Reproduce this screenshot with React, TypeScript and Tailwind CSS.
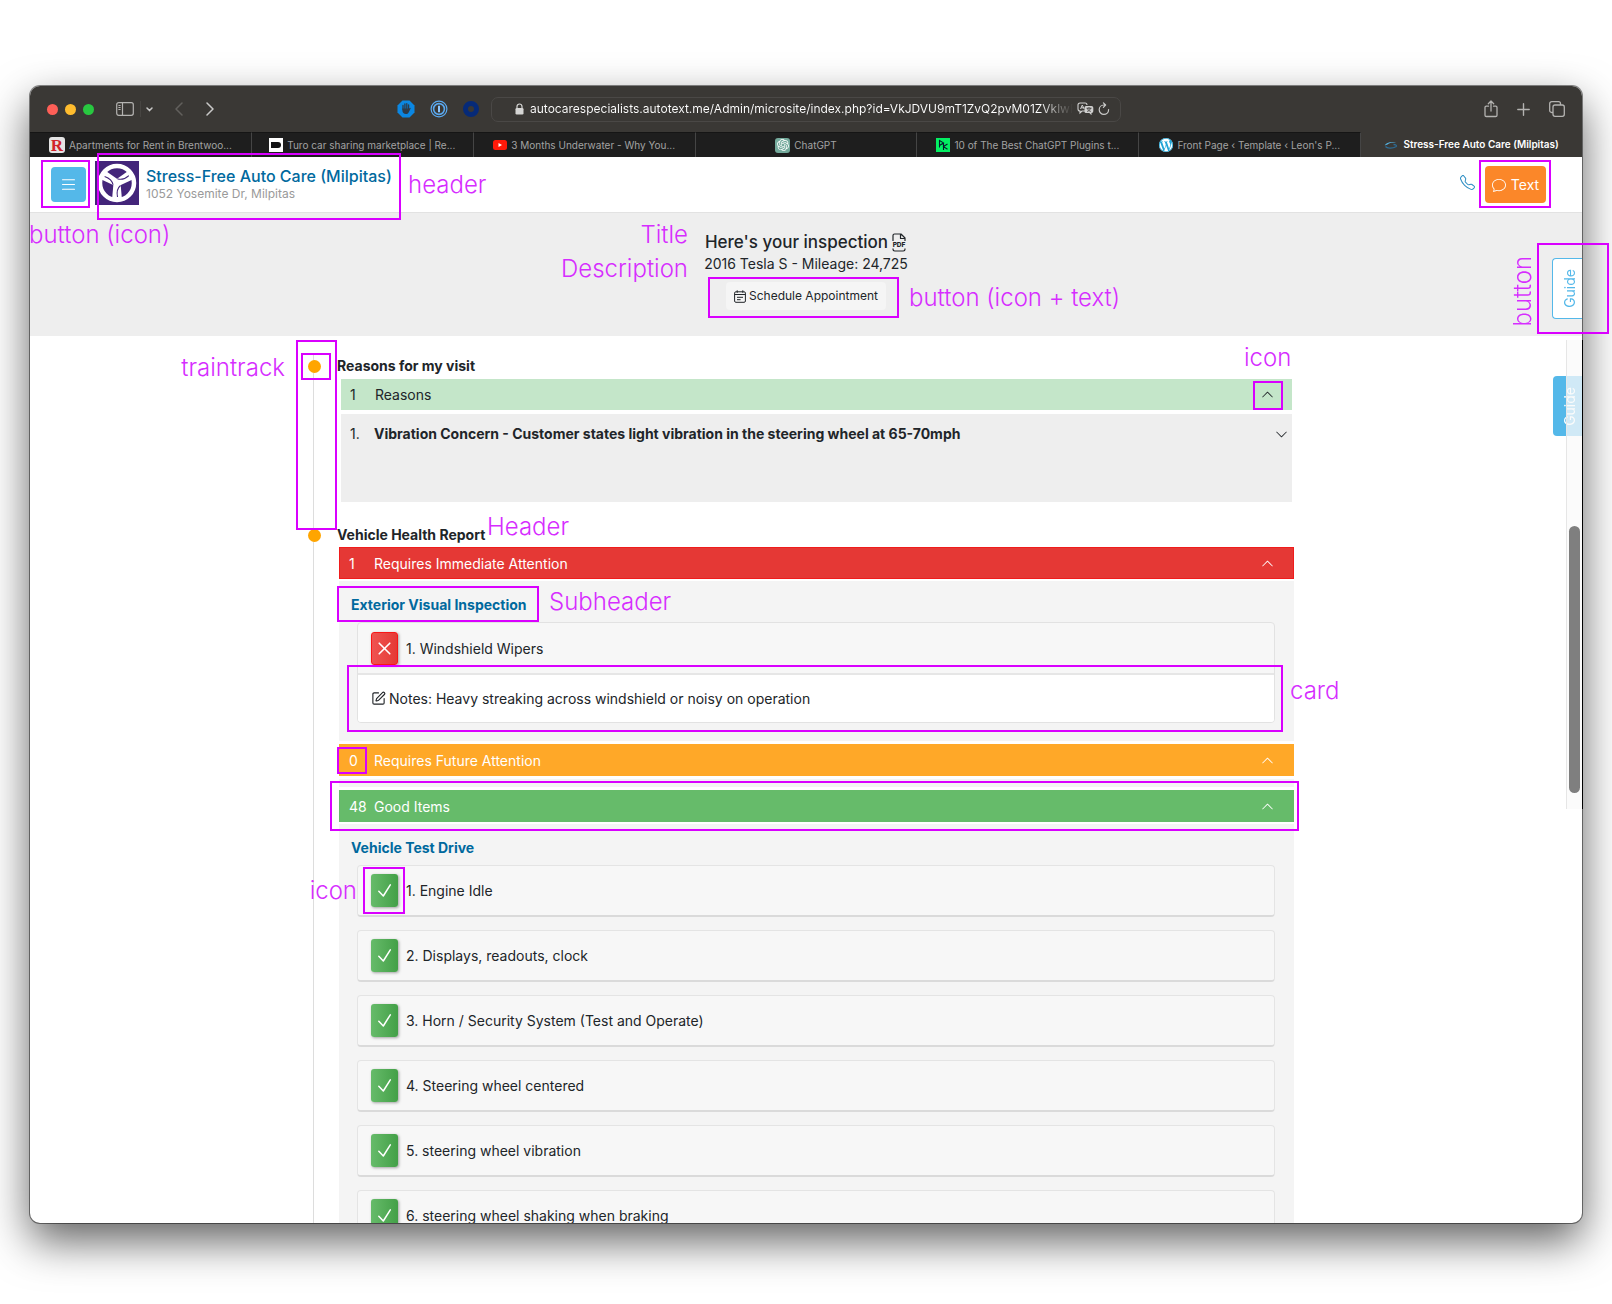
import type { ReactNode } from "react";
import { SquarePen } from "lucide-react";
import { BsChat, BsChevronDown, BsChevronUp, BsList, BsTelephone } from "react-icons/bs";
import { SiOpenai, SiWordpress } from "react-icons/si";

/* ---------- browser chrome ---------- */

function SidebarIcon() {
  return (
    <svg width="18" height="14" viewBox="0 0 18 14" fill="none" stroke="#b4b3b1" strokeWidth="1.2" aria-hidden="true">
      <rect x="0.7" y="0.7" width="16.6" height="12.6" rx="2" />
      <path d="M6.5 1v12M2.4 3.5h2.2M2.4 5.5h2.2M2.4 7.5h2.2" />
    </svg>
  );
}

function Chevron({ dir, color }: { dir: "left" | "right"; color: string }) {
  return (
    <svg width="8" height="14" viewBox="0 0 8 14" fill="none" stroke={color} strokeWidth="1.5" strokeLinecap="round" strokeLinejoin="round" aria-hidden="true">
      <path d={dir === "left" ? "M7 1 1 7l6 6" : "M1 1l6 6-6 6"} />
    </svg>
  );
}

function AdblockIcon() {
  return (
    <svg width="18" height="18" viewBox="0 0 18 18" aria-hidden="true">
      <path d="M5.5.5h7l5 5v7l-5 5h-7l-5-5v-7z" fill="#0b87e3" />
      <path d="M6 9.500V5.500M7.900 8.600V4M9.800 8.600V3.700M11.600 9V4.900" stroke="#2d3b4a" strokeWidth="1.300" strokeLinecap="round" />
      <path d="M5.400 8.500h6.800l1-.7.5.8-2.100 3.800c-.6 1.200-1.300 1.700-2.600 1.700-2.200 0-3.600-1.400-3.600-3.500z" fill="#2d3b4a" />
    </svg>
  );
}

function OnePasswordIcon() {
  return (
    <svg width="18" height="18" viewBox="0 0 18 18" fill="none" aria-hidden="true">
      <circle cx="9" cy="9" r="7.900" stroke="#5aa9f0" strokeWidth="1.200" />
      <circle cx="9" cy="9" r="5.400" stroke="#5aa9f0" strokeWidth="1.600" />
      <path d="M9 5.800v6.400" stroke="#8cc6ff" strokeWidth="2" />
    </svg>
  );
}

function LockIcon() {
  return (
    <svg width="9" height="12" viewBox="0 0 9 12" aria-hidden="true">
      <path d="M2 5.500V3.500a2.500 2.500 0 0 1 5 0v2" fill="none" stroke="#d5d5d4" strokeWidth="1.200" />
      <rect x="0.500" y="5" width="8" height="6.500" rx="1.200" fill="#d5d5d4" />
    </svg>
  );
}

function TranslateIcon() {
  return (
    <svg width="17" height="14" viewBox="0 0 17 14" fill="none" aria-hidden="true">
      <path d="M8 9H5l-2 2V9a2 2 0 0 1-2-2V3a2 2 0 0 1 2-2h5a2 2 0 0 1 2 2" stroke="#d0d0cf" strokeWidth="1.100" />
      <path d="M3.500 7 5.300 3l1.800 4M4.200 5.800h2.200" stroke="#d0d0cf" strokeWidth="1" />
      <path d="M9 4h5.500A1.800 1.800 0 0 1 16.300 5.800v3.400a1.800 1.800 0 0 1-1.800 1.800v2.200L12.300 11H9a1.500 1.500 0 0 1-1.500-1.500v-4A1.500 1.500 0 0 1 9 4z" fill="#d0d0cf" />
      <path d="M9.500 6.200h5M12 5.200v1M10.200 9.400c2-.6 2.800-1.600 3.200-3.100M10.500 6.400c.4 1.500 1.400 2.500 3.200 3" stroke="#3a3835" strokeWidth="0.900" />
    </svg>
  );
}

function ReloadIcon() {
  return (
    <svg width="12" height="14" viewBox="0 0 12 14" fill="none" stroke="#c9c9c8" strokeWidth="1.200" strokeLinecap="round" strokeLinejoin="round" aria-hidden="true">
      <path d="M10.600 7.700a4.700 4.700 0 1 1-4.700-4.700h1.400M5.400.8 7.600 3 5.400 5.300" />
    </svg>
  );
}

function ShareIcon() {
  return (
    <svg width="14" height="18" viewBox="0 0 14 18" fill="none" stroke="#b4b3b1" strokeWidth="1.300" strokeLinecap="round" strokeLinejoin="round" aria-hidden="true">
      <path d="M4.500 6.200H2.300A1.300 1.300 0 0 0 1 7.500v7.700a1.300 1.300 0 0 0 1.300 1.300h9.400a1.300 1.300 0 0 0 1.300-1.300V7.500a1.300 1.300 0 0 0-1.300-1.300H9.500M7 11V1.200M4.300 3.700 7 1l2.700 2.700" />
    </svg>
  );
}

function PlusIcon() {
  return (
    <svg width="13" height="13" viewBox="0 0 13 13" stroke="#b4b3b1" strokeWidth="1.400" strokeLinecap="round" aria-hidden="true">
      <path d="M6.500.8v11.400M.8 6.500h11.400" />
    </svg>
  );
}

function TabsIcon() {
  return (
    <svg width="16" height="16" viewBox="0 0 16 16" fill="none" stroke="#b4b3b1" strokeWidth="1.300" aria-hidden="true">
      <rect x="4" y="4" width="11.300" height="11.300" rx="2" />
      <path d="M4 11.500H2.700A2 2 0 0 1 .7 9.500V2.700a2 2 0 0 1 2-2h6.800a2 2 0 0 1 2 2V4" />
    </svg>
  );
}

function Toolbar() {
  return (
    <div className="grid h-[46px] shrink-0 grid-cols-[1fr_630px_1fr] items-center bg-[#3a3835]">
      <div className="flex items-center pl-[17px]">
        <span className="flex gap-[7px]">
          <span className="size-[11px] rounded-full bg-[#fe5f57]" />
          <span className="size-[11px] rounded-full bg-[#febc2e]" />
          <span className="size-[11px] rounded-full bg-[#28c840]" />
        </span>
        <button type="button" aria-label="Show sidebar" className="ml-[22px]">
          <SidebarIcon />
        </button>
        <span className="ml-[6px] h-[16px] w-px bg-[#474542]" />
        <button type="button" aria-label="Tab groups" className="ml-[5px]">
          <svg width="7" height="5" viewBox="0 0 7 5" fill="none" stroke="#c9c9c8" strokeWidth="1.500" strokeLinecap="round" strokeLinejoin="round" aria-hidden="true">
            <path d="M1 1l2.500 2.600L6 1" />
          </svg>
        </button>
        <button type="button" aria-label="Back" className="ml-[22px]">
          <Chevron dir="left" color="#62605d" />
        </button>
        <button type="button" aria-label="Forward" className="ml-[23px]">
          <Chevron dir="right" color="#c9c9c8" />
        </button>
        <span className="mr-[12px] ml-auto flex items-center gap-[15px]">
          <AdblockIcon />
          <OnePasswordIcon />
          <span className="size-[16px] rounded-full border-[5px] border-[#062a78]" />
        </span>
      </div>
      <div className="flex h-[25px] items-center rounded-[7px] border border-[#4a4846] pr-[10px] pl-[23px]">
        <LockIcon />
        <span className="ml-[6px] w-0 grow overflow-hidden bg-linear-to-r from-[#ffffff] from-94% to-[#3a3835] bg-clip-text text-[12px] whitespace-nowrap text-transparent">
          autocarespecialists.autotext.me/Admin/microsite/index.php?id=VkJDVU9mT1ZvQ2pvM01ZVklwRGRoZ
        </span>
        <span className="ml-[4px] flex items-center gap-[4px]">
          <TranslateIcon />
          <ReloadIcon />
        </span>
      </div>
      <div className="flex items-center justify-end gap-[19px] pr-[17px]">
        <button type="button" aria-label="Share"><ShareIcon /></button>
        <button type="button" aria-label="New tab"><PlusIcon /></button>
        <button type="button" aria-label="Show tabs"><TabsIcon /></button>
      </div>
    </div>
  );
}

const tabs: { label: string; icon: ReactNode }[] = [
  {
    label: "Apartments for Rent in Brentwoo...",
    icon: (
      <span className="flex size-[16px] items-center justify-center rounded-[3px] bg-[#e4e4e4] font-['Liberation_Serif',serif] text-[17px] leading-none font-bold text-[#d2232a]">R</span>
    ),
  },
  {
    label: "Turo car sharing marketplace | Re...",
    icon: (
      <span className="flex size-[14px] items-center justify-center bg-white">
        <span className="h-[6px] w-[10px] rounded-r-[3px] bg-[#121214]" />
      </span>
    ),
  },
  {
    label: "3 Months Underwater - Why You...",
    icon: (
      <svg width="14" height="10" viewBox="0 0 14 10" aria-hidden="true">
        <rect width="14" height="10" rx="2.500" fill="#ff1a0a" />
        <path d="M5.500 3v4L9 5z" fill="#fff" />
      </svg>
    ),
  },
  {
    label: "ChatGPT",
    icon: (
      <span className="flex size-[15px] items-center justify-center rounded-[3px] bg-[#74aa9c] text-white">
        <SiOpenai size={12} />
      </span>
    ),
  },
  {
    label: "10 of The Best ChatGPT Plugins t...",
    icon: (
      <svg width="14" height="14" viewBox="0 0 14 14" aria-hidden="true">
        <rect width="14" height="14" fill="#03ef62" />
        <path d="M3.500 9.500V2.500l4 2.400-4 2.600M11.500 6 7.500 8.600l4 2.600M7.500 5v7" fill="none" stroke="#05192d" strokeWidth="1.100" />
      </svg>
    ),
  },
  {
    label: "Front Page ‹ Template ‹ Leon's P...",
    icon: (
      <span className="flex size-[14px] items-center justify-center rounded-full bg-white text-[#21a5d6]">
        <SiWordpress size={14} />
      </span>
    ),
  },
  {
    label: "Stress-Free Auto Care (Milpitas)",
    icon: (
      <svg width="14" height="8" viewBox="0 0 14 8" fill="none" aria-hidden="true">
        <path d="M.7 4.500C2 1.800 6 .3 12.500 1.300 9 1.200 5 2 3.500 3.500z" fill="#56b6e6" />
        <path d="M1.500 5.500C3 7.500 8 7.800 12.500 5.500M9.500 3.500c2 0 3.200.6 3 2" stroke="#2d6c95" strokeWidth="1.300" />
      </svg>
    ),
  },
];

function TabBar() {
  return (
    <div className="flex h-[25px] shrink-0 bg-[#1e1e1e] text-[10px]">
      {tabs.map((t, i) => (
        <button
          key={t.label}
          type="button"
          className={
            i === tabs.length - 1
              ? "flex min-w-0 flex-1 items-center justify-center gap-[5px] bg-[#3a3835] font-semibold text-white"
              : "flex min-w-0 flex-1 items-center justify-center gap-[4px] border-t border-r border-t-[#151515] border-r-[#454545] text-[#a3a3a3]"
          }
        >
          {t.icon}
          <span className="whitespace-nowrap">{t.label}</span>
        </button>
      ))}
    </div>
  );
}

/* ---------- page ---------- */

function ShopLogo() {
  return (
    <svg width="44" height="44" viewBox="0 0 44 44" aria-hidden="true">
      <rect width="44" height="44" fill="#43257a" />
      <g fill="#fff">
        {[0, 120, 240].map((a) => (
          <path key={a} transform={`rotate(${a} 22 22)`} d="M18.500 22 17 39h10l-1.500-17L22 18z" />
        ))}
      </g>
      <g fill="none" stroke="#43257a" strokeWidth="1.100">
        {[0, 120, 240].map((a) => (
          <path key={a} transform={`rotate(${a} 22 22)`} d="M25.500 24.500C22.500 27 21.500 31 22.500 36" />
        ))}
      </g>
      <circle cx="22" cy="22" r="17" fill="none" stroke="#fff" strokeWidth="4.500" />
    </svg>
  );
}

function PdfIcon() {
  return (
    <svg width="16" height="19" viewBox="0 0 16 19" fill="none" stroke="currentColor" strokeWidth="1.200" strokeLinejoin="round" aria-hidden="true">
      <path d="M2 8V2.500A1.500 1.500 0 0 1 3.500 1H10l4 4v3M9.500 1v4.500H14M2 15.500v.8A1.700 1.700 0 0 0 3.700 18h8.600a1.700 1.700 0 0 0 1.700-1.700v-.8" />
      <text x="8" y="14.200" textAnchor="middle" fontSize="6.500" fontWeight="800" fill="currentColor" stroke="none">PDF</text>
    </svg>
  );
}

function CalendarIcon() {
  return (
    <svg width="12" height="13" viewBox="0 0 12 13" fill="none" stroke="currentColor" strokeWidth="1" aria-hidden="true">
      <rect x="0.600" y="1.800" width="10.800" height="10.500" rx="1.300" />
      <path d="M.6 4.500h10.800M3.200.3v2.500M8.800.3v2.500M3 7.300h6M3 9.700h3.600" />
    </svg>
  );
}

function CheckIcon() {
  return (
    <svg width="15" height="15" viewBox="0 0 15 15" fill="none" stroke="currentColor" strokeWidth="1.500" strokeLinecap="round" strokeLinejoin="round" aria-hidden="true">
      <path d="M1.800 8.300 6.300 13 13.300 1.800" />
    </svg>
  );
}

function CrossIcon() {
  return (
    <svg width="13" height="13" viewBox="0 0 13 13" stroke="currentColor" strokeWidth="1.600" strokeLinecap="round" aria-hidden="true">
      <path d="M1.200 1.200l10.600 10.600M11.800 1.200 1.200 11.800" />
    </svg>
  );
}

function SiteHeader() {
  return (
    <header className="flex h-[56px] shrink-0 items-center border-b border-[#e2e2e2] bg-white pr-[36px] pl-[21px]">
      <button type="button" aria-label="Menu" className="flex size-[35px] items-center justify-center rounded-[4px] bg-[#54b8e9] text-white">
        <BsList size={19} />
      </button>
      <div className="mb-[4px] ml-[9px]">
        <ShopLogo />
      </div>
      <div className="mb-[3px] ml-[7px]">
        <h1 className="text-[16px] leading-[20px] font-medium text-[#00699e]">Stress-Free Auto Care (Milpitas)</h1>
        <p className="text-[12px] leading-[15px] text-[#9a9a9a]">1052 Yosemite Dr, Milpitas</p>
      </div>
      <button type="button" aria-label="Call" className="mb-[4px] ml-auto text-[#2f8fc4]">
        <BsTelephone size={15} />
      </button>
      <button type="button" className="ml-[10px] flex h-[37px] w-[61px] items-center justify-center gap-[5px] rounded-[4px] bg-[#fb8729] text-[14px] text-white">
        <BsChat size={14} />
        Text
      </button>
    </header>
  );
}

function Hero() {
  return (
    <section className="flex h-[123px] shrink-0 flex-col items-center bg-[#eeeeee] pt-[18px]">
      <h2 className="flex items-center gap-[3px] text-[17px] leading-[22px] font-medium">
        Here&apos;s your inspection
        <PdfIcon />
      </h2>
      <p className="text-[14px] leading-[21px]">2016 Tesla S - Mileage: 24,725</p>
      <button type="button" className="mt-[8px] flex h-[28px] items-center gap-[3px] rounded-[4px] bg-[#f5f5f5] px-[8px] text-[12px]">
        <CalendarIcon />
        Schedule Appointment
      </button>
    </section>
  );
}

function Bar({ count, label, tone }: { count: string; label: string; tone: string }) {
  return (
    <button type="button" className={`flex w-full items-center text-left text-[14px] ${tone}`}>
      <span className="w-[25px]">{count}</span>
      <span>{label}</span>
      <BsChevronUp size={13} className="ml-auto" />
    </button>
  );
}

function StopHeading({ children }: { children: ReactNode }) {
  return (
    <h3 className="relative flex h-[24px] items-center pb-[2px] pl-[23px] text-[14px] font-bold">
      <span className="absolute top-[6px] -left-[6px] size-[13px] rounded-full bg-[#ffa500]" />
      {children}
    </h3>
  );
}

function Subheader({ children }: { children: ReactNode }) {
  return <h4 className="flex h-[41px] items-center pt-[5px] pl-[12px] text-[14px] font-bold text-[#00699e]">{children}</h4>;
}

function GoodItem({ label }: { label: string }) {
  return (
    <li className="flex h-[52px] items-center rounded-[4px] border border-b-2 border-[#e4e4e4] border-b-[#dadada] bg-[#f7f7f7] pl-[13px] text-[14px]">
      <span className="flex h-[33px] w-[27px] items-center justify-center rounded-[3px] bg-linear-to-r from-[#66bb6a] to-[#43a047] text-white shadow-[1px_1px_3px_rgba(0,0,0,0.35)]">
        <CheckIcon />
      </span>
      <span className="ml-[8px]">{label}</span>
    </li>
  );
}

const goodItems = [
  "1. Engine Idle",
  "2. Displays, readouts, clock",
  "3. Horn / Security System (Test and Operate)",
  "4. Steering wheel centered",
  "5. steering wheel vibration",
  "6. steering wheel shaking when braking",
];

function Timeline() {
  return (
    <main className="mx-auto min-h-0 w-full max-w-[986px] flex-1">
      <div className="pt-[18px]">
        <div className="border-l border-[#dddddd]">
          <StopHeading>Reasons for my visit</StopHeading>
          <div className="pt-px pr-[7px] pb-[21px] pl-[27px]">
            <Bar count="1" label="Reasons" tone="h-[31px] bg-[#c4e6c9] pl-[9px] pr-[18px]" />
            <div className="mt-[4px] flex h-[88px] items-start bg-[#eeeeee] pt-[9px] pr-[4px] pl-[9px] text-[14px] leading-[22px]">
              <span className="w-[24px]">1.</span>
              <span className="font-bold">Vibration Concern - Customer states light vibration in the steering wheel at 65-70mph</span>
              <BsChevronDown size={13} className="mt-[5px] ml-auto" />
            </div>
          </div>
          <StopHeading>Vehicle Health Report</StopHeading>
          <div className="pr-[5px] pl-[25px]">
            <Bar count="1" label="Requires Immediate Attention" tone="h-[32px] border border-[#f01c1c] bg-[#e53835] pl-[9px] pr-[19px] text-white" />
            <div className="mt-[2px] bg-[#f4f4f4] pr-[19px] pb-[18px]">
              <Subheader>Exterior Visual Inspection</Subheader>
              <div className="ml-[18px] overflow-hidden rounded-[4px] border border-[#e2e2e2] bg-[#f7f7f7] text-[14px]">
                <div className="flex h-[52px] items-center border-b-2 border-[#e6e6e6] pl-[13px]">
                  <span className="flex h-[33px] w-[27px] items-center justify-center rounded-[3px] border border-[#f91616] bg-linear-to-r from-[#ef5350] to-[#e53935] text-white shadow-[1px_1px_3px_rgba(0,0,0,0.35)]">
                    <CrossIcon />
                  </span>
                  <span className="ml-[8px]">1. Windshield Wipers</span>
                </div>
                <p className="flex h-[47px] items-center bg-white pl-[13px]">
                  <SquarePen size={15} strokeWidth={1.8} className="mr-[3px]" />
                  Notes: Heavy streaking across windshield or noisy on operation
                </p>
              </div>
            </div>
            <div className="mt-[3px]">
              <Bar count="0" label="Requires Future Attention" tone="h-[32px] bg-[#ffa828] pl-[10px] pr-[20px] text-white" />
            </div>
            <div className="mt-[3px] h-[8px] bg-[#f4f4f4]" />
            <div className="mt-[3px]">
              <Bar count="48" label="Good Items" tone="h-[32px] bg-[#66bb6a] pl-[10px] pr-[20px] text-white" />
            </div>
            <div className="mt-[2px] bg-[#f4f4f4] pr-[19px]">
              <Subheader>Vehicle Test Drive</Subheader>
              <ul className="ml-[18px] flex flex-col gap-[13px]">
                {goodItems.map((g) => (
                  <GoodItem key={g} label={g} />
                ))}
              </ul>
            </div>
          </div>
        </div>
      </div>
    </main>
  );
}

/* ---------- review annotations drawn over the page ---------- */

function Box({ at }: { at: string }) {
  return <span className={`absolute border-2 border-[#d900ff] ${at}`} />;
}

function Note({ at, children }: { at: string; children: ReactNode }) {
  return (
    <span className={`absolute text-[24px] leading-[32px] font-light whitespace-nowrap text-[#d62dff] [font-variation-settings:'opsz'_14] ${at}`}>
      {children}
    </span>
  );
}

function Annotations() {
  return (
    <div className="pointer-events-none absolute inset-0">
      <Box at="left-[11px] top-[74px] h-[48px] w-[49px]" />
      <Box at="left-[67px] top-[67px] h-[67px] w-[304px]" />
      <Note at="left-[378px] top-[83px]">header</Note>
      <Note at="-left-px top-[133px]">button (icon)</Note>

      <Box at="right-[31px] top-[74px] h-[48px] w-[72px]" />
      <Box at="-right-[27px] top-[157px] h-[91px] w-[72px]" />
      <Note at="right-[43px] top-[170px] rotate-180 [writing-mode:vertical-rl]">button</Note>

      <div className="absolute inset-y-0 left-1/2 w-[986px] -translate-x-1/2">
        <Note at="right-[611px] top-[133px]">Title</Note>
        <Note at="right-[611px] top-[167px]">Description</Note>
        <Box at="left-[395px] top-[191px] h-[41px] w-[191px]" />
        <Note at="left-[596px] top-[196px]">button (icon + text)</Note>

        <Box at="-left-[17px] top-[254px] h-[190px] w-[41px]" />
        <Box at="-left-[12px] top-[267px] h-[27px] w-[30px]" />
        <Note at="right-[1014px] top-[266px]">traintrack</Note>
        <Box at="left-[940px] top-[295px] h-[29px] w-[30px]" />
        <Note at="left-[931px] top-[256px]">icon</Note>

        <Note at="left-[174px] top-[425px]">Header</Note>
        <Box at="left-[24px] top-[500px] h-[36px] w-[202px]" />
        <Note at="left-[236px] top-[500px]">Subheader</Note>
        <Box at="left-[34px] top-[579px] h-[67px] w-[936px]" />
        <Note at="left-[977px] top-[589px]">card</Note>
        <Box at="left-[24px] top-[661px] h-[27px] w-[30px]" />
        <Box at="left-[17px] top-[695px] h-[50px] w-[969px]" />
        <Box at="left-[50px] top-[781px] h-[47px] w-[42px]" />
        <Note at="right-[942px] top-[789px]">icon</Note>
      </div>
    </div>
  );
}

export default function App() {
  return (
    <div className="flex h-screen flex-col overflow-hidden bg-white px-[30px] pt-[86px] pb-[81px] font-['Inter',sans-serif] text-[#212529]">
      <div className="relative min-h-0 flex-1">
        <div className="relative flex h-full flex-col overflow-hidden rounded-[10px] bg-white shadow-[0_0_0_1px_rgba(0,0,0,0.45),0_18px_44px_rgba(0,0,0,0.62)]">
          <Toolbar />
          <TabBar />
          <SiteHeader />
          <Hero />
          <Timeline />
          <button type="button" className="absolute top-[172px] right-0 flex h-[61px] w-[30px] items-center justify-center rounded-l-[4px] border border-r-0 border-[#54b8e9] bg-white pl-[3px] text-[14px] text-[#54b8e9]">
            <span className="rotate-180 [writing-mode:vertical-rl]">Guide</span>
          </button>
          <button type="button" className="absolute top-[290px] right-0 flex h-[60px] w-[29px] items-center justify-center rounded-l-[4px] bg-[#54b8e9] pl-[3px] text-[14px] text-white">
            <span className="rotate-180 [writing-mode:vertical-rl]">Guide</span>
          </button>
          <div className="absolute top-[254px] right-0 h-[469px] w-[16px] border-l border-[#e6e6e6] bg-[#fafafa]/75">
            <div className="mt-[186px] ml-[2px] h-[267px] w-[11px] rounded-full bg-[#7f7f7f]" />
          </div>
        </div>
        <div className="absolute top-[254px] -right-px h-[469px] w-px bg-black" />
        <Annotations />
      </div>
    </div>
  );
}
